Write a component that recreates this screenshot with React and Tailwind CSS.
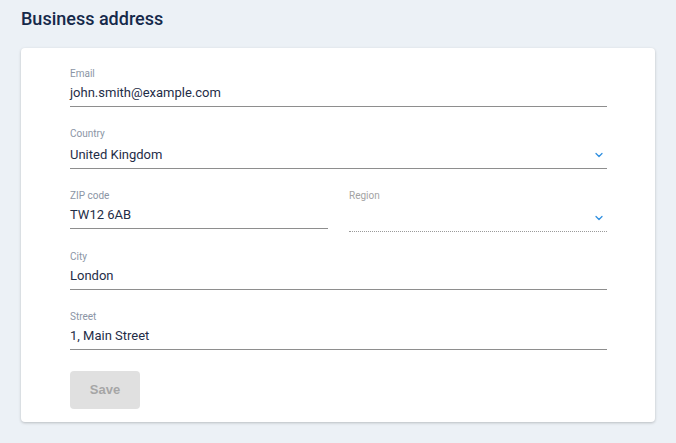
import { ChevronDown } from 'lucide-react'

// One underlined form field: small label on top, value below
const Field = ({ label, value, select = false, disabled = false }) => (
  <div>
    <p className={`text-[10px] leading-[12px] ${disabled ? 'text-[#a3a3a3]' : 'text-[#8b95a5]'}`}>{label}</p>
    <div
      className={`mt-[5px] flex items-center justify-between pb-[5px] ${
        disabled ? 'border-b border-dotted border-[#9a9a9a] pt-[3px]' : 'border-b border-[#8e8e8e]'
      } ${select && !disabled ? 'pt-[2px]' : ''}`}
    >
      <span className="text-[13px] leading-[16px] text-[#1f2d47]">{value || '\u00a0'}</span>
      {select && <ChevronDown className="mr-[2px] h-[12px] w-[12px] text-[#2f8fe0]" strokeWidth={2.5} />}
    </div>
  </div>
)

const App = () => {
  return (
    <div className="min-h-screen bg-[#ecf1f6] px-[21px] pt-[6px] pb-[20px]" style={{ fontFamily: 'Roboto, sans-serif' }}>
      <h2 className="text-[18px] font-medium leading-[26px] text-[#15294a]">Business address</h2>

      <div className="mt-[16px] rounded-[4px] bg-white pt-[20px] pb-[13px] pl-[49px] pr-[48px] shadow-[0_1px_3px_rgba(0,0,0,0.22)]">
        <div className="flex flex-col">
          <Field label="Email" value="john.smith@example.com" />
          <div className="mt-[21px]">
            <Field label="Country" value="United Kingdom" select />
          </div>
          <div className="mt-[21px] grid grid-cols-2 gap-[21px]">
            <Field label="ZIP code" value="TW12 6AB" />
            <Field label="Region" select disabled />
          </div>
          <div className="mt-[19px]">
            <Field label="City" value="London" />
          </div>
          <div className="mt-[21px]">
            <Field label="Street" value="1, Main Street" />
          </div>
        </div>

        <button
          disabled
          className="mt-[21px] h-[38px] w-[70px] rounded-[4px] bg-[#e0e0e0] text-[13px] font-bold text-[#a6a6a6]"
          style={{ fontFamily: '"Liberation Sans", Arial, sans-serif' }}
        >
          Save
        </button>
      </div>
    </div>
  )
}

export default App
